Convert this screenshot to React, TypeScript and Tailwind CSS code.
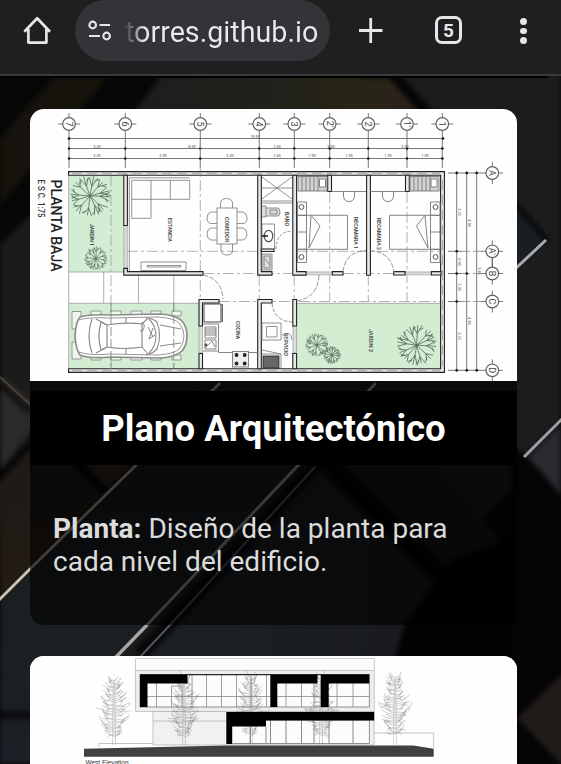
import React from "react";

/* ---------- shared drawing helpers ---------- */

function noise(n: number) {
  const v = Math.sin(n * 127.1 + 11.7) * 43758.5453;
  return v - Math.floor(v);
}

const f = (n: number) => n.toFixed(1);

function PlanTree({ x, y, r, seed }: { x: number; y: number; r: number; seed: number }) {
  const count = 12;
  let d = "";
  for (let i = 0; i < count; i++) {
    const a = (i / count) * Math.PI * 2 + noise(seed + i) * 0.25;
    const m = r * (0.45 + noise(seed + i * 3) * 0.2);
    const mx = x + Math.cos(a) * m;
    const my = y + Math.sin(a) * m;
    d += `M${f(x)} ${f(y)}L${f(mx)} ${f(my)}`;
    for (const s of [-0.2, 0.02, 0.24]) {
      const e = r * (0.88 + noise(seed + i * 7 + s * 10) * 0.14);
      d += `M${f(mx)} ${f(my)}L${f(x + Math.cos(a + s) * e)} ${f(y + Math.sin(a + s) * e)}`;
    }
    const k = r * 0.76;
    d += `M${f(x + Math.cos(a + 0.12) * k)} ${f(y + Math.sin(a + 0.12) * k)}L${f(x + Math.cos(a + 0.33) * r * 0.9)} ${f(y + Math.sin(a + 0.33) * r * 0.9)}`;
  }
  return <path d={d} stroke="#4a6352" strokeWidth={r > 15 ? 0.75 : 0.6} fill="none" />;
}

function ElevationTree({ x, top, seed }: { x: number; top: number; seed: number }) {
  const base = 745;
  let d = `M${x - 1.5} ${base}L${x - 0.6} ${top + 6}M${x + 1.5} ${base}L${x + 0.8} ${top + 4}`;
  for (let i = 0; i < 58; i++) {
    const t = i / 58;
    const y0 = top + 3 + t * 58;
    const side = i % 2 ? 1 : -1;
    const spread = t < 0.6 ? 6 + t * 20 : 18 - (t - 0.6) * 26;
    const len = spread * (0.45 + noise(seed + i * 4) * 0.55);
    const ex = x + side * len;
    const ey = y0 - 2 + (noise(seed + i * 5) - 0.6) * 7;
    const mx = x + side * len * 0.55;
    const my = y0 + (noise(seed + i * 2) - 0.3) * 3;
    d += `M${x} ${f(y0 + 1)}L${f(mx)} ${f(my)}L${f(ex)} ${f(ey)}M${f(mx)} ${f(my)}l${f(side * 2.5)} ${f(noise(seed + i * 9) * 7 - 3)}M${f(ex)} ${f(ey)}l${f(side * 1)} ${f(noise(seed + i) * 6 - 4)}`;
  }
  return <path d={d} stroke="#777" strokeWidth="0.5" strokeOpacity="0.65" fill="none" />;
}

function Wall({ d }: { d: string }) {
  return <path d={d} fill="#e8e8e8" stroke="#222" strokeWidth="1.1" />;
}

function VText({ x, y, len, size, children, weight = 400, fill = "#333" }: { x: number; y: number; len: number; size: number; children: string; weight?: number; fill?: string }) {
  return (
    <text transform={`translate(${x} ${y}) rotate(90)`} fontSize={size} fontWeight={weight} textLength={len} lengthAdjust="spacingAndGlyphs" fill={fill}>
      {children}
    </text>
  );
}

/* ---------- page background ---------- */

function Backdrop() {
  return (
    <svg className="absolute inset-0 h-full w-full" viewBox="0 74 561 690" preserveAspectRatio="none" aria-hidden="true">
      <defs>
        <filter id="soft" x="-5%" y="-5%" width="110%" height="110%" colorInterpolationFilters="sRGB"><feGaussianBlur stdDeviation="2.6" /></filter>
        <filter id="edge" x="-5%" y="-5%" width="110%" height="110%" colorInterpolationFilters="sRGB"><feGaussianBlur stdDeviation="0.6" /></filter>
        <linearGradient id="slab" x1="0" x2="1"><stop offset="0" stopColor="#1d1d1c" /><stop offset="0.45" stopColor="#20201c" /><stop offset="0.75" stopColor="#282516" /><stop offset="1" stopColor="#2a211c" /></linearGradient>
        <linearGradient id="brown" x1="0" y1="0" x2="0" y2="1"><stop offset="0" stopColor="#1c1a18" /><stop offset="1" stopColor="#241b14" /></linearGradient>
        <linearGradient id="cool" x1="0" y1="0" x2="0" y2="1"><stop offset="0" stopColor="#191a1d" /><stop offset="0.55" stopColor="#1a2022" /><stop offset="1" stopColor="#1c1f26" /></linearGradient>
        <linearGradient id="steel" x1="0" x2="1"><stop offset="0" stopColor="#1d2125" /><stop offset="1" stopColor="#17181b" /></linearGradient>
      </defs>
      <rect y="74" width="561" height="690" fill="#070707" />
      <g filter="url(#soft)">
        <path d="M12 124L58 74H110L0 205V140Z" fill="#15130b" />
        <path d="M0 245L140 110L165 74H385L561 260V440L240 764H0Z" fill="#1b1b1b" />
        <path d="M134 112L163 74H392L422 112Z" fill="url(#slab)" />
        <path d="M362 74L390 74L424 112" stroke="#050505" strokeWidth="7" fill="none" />
        <path d="M400 74H561V440L517 470V205Z" fill="#1b1c1e" />
        <path d="M510 192L552 238L510 275Z" fill="#191e23" />
        <path d="M510 198L548 241" stroke="#070707" strokeWidth="5" />
        <path d="M0 375L42 408L32 428L0 470Z" fill="#2c2a29" />
        <path d="M-4 476L40 430L137 465L0 600Z" fill="url(#brown)" />
        <path d="M-4 480L38 436" stroke="#060606" strokeWidth="7" />
        <path d="M0 384L30 412" stroke="#0a0909" strokeWidth="5" />
        <path d="M104 490L80 464L90 440L200 391Z" fill="#2c251d" />
        <path d="M75 460L104 492" stroke="#020202" strokeWidth="9" />
        <path d="M0 602L142 465H305L116 655V764H0Z" fill="url(#cool)" />
        <path d="M140 660L325 467H340L520 660Z" fill="url(#steel)" />
        <path d="M345 467H440L517 560V640L480 610Z" fill="#161618" />
        <path d="M318 454L517 650" stroke="#040404" strokeWidth="20" />
        <path d="M398 764L396 655L404 625L450 560L561 520V764Z" fill="#020202" />
        <path d="M140 655L315 467" stroke="#08080b" strokeWidth="15" />
        <path d="M512 445L528 458L561 496V764H512Z" fill="#040404" />
        <path d="M529 458L561 427V495Z" fill="#292b30" />
        <path d="M517 718L565 672V768Z" fill="#211c1a" />
        <path d="M-4 715H40" stroke="#08090c" strokeWidth="7" />
      </g>
      <g filter="url(#edge)" fill="none">
        <path d="M0 377L32 406" stroke="#4a4036" strokeWidth="1.8" />
        <path d="M-2 601L31 568" stroke="#cdc4b4" strokeWidth="2.8" />
        <path d="M31 568L220 383" stroke="#a49c92" strokeWidth="2.7" />
        <path d="M116 657L147 625" stroke="#a6a6a8" strokeWidth="3.4" />
        <path d="M147 625L376 383" stroke="#8f9298" strokeWidth="2.8" />
        <path d="M140 657L170 625L315 467" stroke="#53555b" strokeWidth="2" />
        <path d="M514 270L546 240" stroke="#aaa9ab" strokeWidth="3" />
        <path d="M524 457L565 416" stroke="#a0a0a4" strokeWidth="3" />
      </g>
    </svg>
  );
}

/* ---------- floor plan ---------- */

const axes: [number, string][] = [[69, "7"], [125.3, "6"], [200.3, "5"], [259.3, "4"], [294.3, "3"], [329.7, "2'"], [368.3, "2"], [407, "1'"], [442.3, "1"]];
const rows: [number, string][] = [[173, "A"], [251.3, "A'"], [273.5, "B"], [301.5, "C"], [370.3, "D"]];

function FloorPlan() {
  const line = "#777";
  return (
    <svg className="block h-[272px] w-full" viewBox="30 109 487 272" fontFamily="Roboto, 'Liberation Sans', sans-serif" role="img" aria-label="Planta baja">
      <rect x="30" y="109" width="487" height="272" fill="#fefefe" />
      <g fill="#d2edd2">
        <rect x="69" y="175" width="55" height="97" />
        <rect x="69" y="303.3" width="130" height="66" />
        <rect x="296" y="303.3" width="145" height="66" />
      </g>

      {/* axis bubbles and dimension strings */}
      <g stroke="#555" strokeWidth="0.8" fill="none">
        {axes.map(([x]) => (
          <g key={x}>
            <circle cx={x} cy="124" r="6.3" strokeWidth="1.2" stroke="#666" />
            <path d={`M${x - 11} 124h5M${x + 6} 124h5M${x} 113v5M${x} 130v38`} />
          </g>
        ))}
        <path d="M68 138.5H444M68 148.5H444M68 158.5H444" />
        {rows.map(([y]) => (
          <g key={y}>
            <circle cx="492.3" cy={y} r="6.3" strokeWidth="1.2" stroke="#666" />
            <path d={`M481 ${y}h5M498 ${y}h5M492.3 ${y - 11}v5M492.3 ${y + 6}v5M448 ${y}h14`} />
          </g>
        ))}
        <path d="M456.7 171V372M466.7 171V372M476.7 171V372M462 173H481M462 370.3H481M492.3 258V267" />
        <path d="M462 251.3H481M462 273.5H481M462 301.5H481" strokeDasharray="8 3" stroke="#888" />
      </g>
      <g fill="#111">
        {axes.map(([x, n]) => (
          <React.Fragment key={n}>
            {[148.5, 158.5].map((y) => <circle key={y} cx={x} cy={y} r="1.2" />)}
            <text transform={`translate(${x - 3.2} 124) rotate(90)`} textAnchor="middle" fontSize="9" fill="#444">{n}</text>
          </React.Fragment>
        ))}
        <circle cx="69" cy="138.5" r="1.3" /><circle cx="443" cy="138.5" r="1.3" />
        {rows.map(([y, n]) => (
          <React.Fragment key={n}>
            <circle cx="456.7" cy={y} r="1.3" />
            {y !== 251.3 && y !== 301.5 && <circle cx="466.7" cy={y} r="1.3" />}
            <text transform={`translate(489 ${y}) rotate(90)`} textAnchor="middle" fontSize="9" fill="#444">{n}</text>
          </React.Fragment>
        ))}
        <circle cx="476.7" cy="173" r="1.3" /><circle cx="476.7" cy="370.3" r="1.3" />
      </g>
      <g fontSize="3.8" fontWeight="500" fill="#777" textAnchor="middle">
        <text x="255" y="137.5">19.95</text>
        <text x="97" y="147.6">3.20</text><text x="192" y="147.6">8.00</text><text x="277" y="147.6">1.65</text><text x="331" y="147.6">3.90</text><text x="405" y="147.6">3.90</text>
        <text x="97" y="157.3">3.20</text><text x="163" y="157.3">3.90</text><text x="230" y="157.3">3.30</text><text x="277" y="157.3">1.65</text><text x="312" y="157.3">1.90</text><text x="349" y="157.3">1.95</text><text x="388" y="157.3">1.95</text><text x="425" y="157.3">1.90</text>
        {([[458, 212, "3.75"], [468, 223, "4.90"], [458, 262, "0.90"], [458, 287, "1.30"], [478, 271, "9.45"], [458, 336, "3.75"], [468, 321, "4.85"]] as [number, number, string][]).map(([x, y, t]) => (
          <text key={x + "-" + y} transform={`translate(${x} ${y}) rotate(90)`}>{t}</text>
        ))}
      </g>

      {/* dashed axis lines */}
      <g stroke="#a0a0a0" strokeWidth="0.8" fill="none" strokeDasharray="11 3 3 3">
        <path d="M111 175V369M200.3 140V300M173.8 303V369M329.7 192V301M368.3 275V301M407 192V301M294.3 275V301M259.3 275V301" />
        <path d="M127 251.3H257M297 251.3H441M203 273.5H441M219 301.5H441" />
      </g>

      {/* site and paving */}
      <path d="M68.7 175V369M69 272H124M69 303.3H199M103.7 272V303M138.5 275V303M173.8 275V303M297 303.3H441" stroke="#9a9a9a" strokeWidth="0.8" fill="none" />

      {/* walls */}
      <path d="M123.9 225h3.4v44h-3.4zM199 326h3.5v27H199zM293 326h3.5v27H293zM306 272h27v2.8h-27zM405 272h27v2.8h-27z" fill="#ddd" stroke="#999" strokeWidth="0.7" />
      <Wall d="M68.6 171.6H444.4V372.4H68.6V368.8H440.6V175.2H68.6Z" />
      <path d="M72 173.4H440M72 370.6H440M442.5 180V366" stroke="#999" strokeWidth="0.8" strokeDasharray="10 5" />
      <Wall d="M123.8 175.2h3.6v50.3h-3.6z" />
      <Wall d="M123.8 268.4h3.6v3.2H203v3.5H123.8z" />
      <Wall d="M199 299.5H219V303H202.5V326H199z" />
      <Wall d="M199 353.5h3.5V368.8H199z" />
      <Wall d="M257.7 175.2h3.6V271.6H272v3.5H257.7z" />
      <Wall d="M257.7 299.5H272V303H261.3V368.8H257.7z" />
      <Wall d="M292.8 175.2h3.8V271.6H306v3.5H292.8z" />
      <Wall d="M292.8 299.5h3.8V326h-3.8zM292.8 353.5h3.8v15.3h-3.8z" />
      <Wall d="M366.6 175.2h3.8V275.2h-3.8z" />
      <Wall d="M327.7 175.2h3.8V191.5h-3.8zM405.5 175.2h3.8V191.5h-3.8z" />
      <Wall d="M332.3 271.6H343V275H332.3zM393.7 271.6H405V275H393.7zM431.4 271.6H441V275H431.4z" />
      <Wall d="M261.3 249H274V251.5H261.3z" />

      {/* living and dining furniture */}
      <g stroke={line} strokeWidth="0.8" fill="none">
        <path d="M129.3 177.8H189.7M129.3 177.8V271M131.7 180.3H189.7V199.3H151V218.3H131.7ZM131.7 199.3H151M151 180.3V199.3M170.3 180.3V199.3" />
        <path d="M141 262H186V270.5H141Z" />
        <path d="M147 265.5H181V267H147Z" />
        <rect x="217" y="208" width="20" height="36" />
        <path d="M220.5 208V203Q221 198.500 226.500 198.500T232.500 203V208M221 244V250Q221.500 255 227 255T232.500 250V244" />
        <path d="M217 212H211Q207 213 207 218T211 223.500H217M217 228H211Q207 229 207 234T211 240H217M237 212H243Q247 213 247 218T243 223.500H237M237 228H243Q247 229 247 234T243 240H237" />
      </g>

      {/* bathroom and service */}
      <g stroke={line} strokeWidth="0.8" fill="none">
        <path d="M262 201H292M262 203H292M262 177L292 199M262 199L292 177M262 188H292" />
        <path d="M262 206H266V217H262M266 208H278Q280 208 280 212T278 216H266M270 210H277V214H270Z" fill="#ddd" />
        <path d="M262 224H274.500V249H262Z" /><ellipse cx="268.500" cy="236" rx="4.300" ry="5.700" strokeWidth="1.2" stroke="#555" /><path d="M262 236H268" stroke="#111" strokeWidth="1.500" />
        <path d="M262 254H272V270H262ZM264 256H270V268H264ZM264 258L270 265" fill="#ddd" />
        <path d="M276 249Q276 232 292 231" strokeDasharray="3 1.5" />
        <path d="M262 323H281V340H262ZM266.500 326.500H277V337H266.500Z" />
        <path d="M262 350L281 354M262 354H281V368M282 335Q291 330 292 340" />
        <rect x="263" y="356" width="16" height="12" fill="#666" stroke="#222" />
        <path d="M272 303Q274 321 292 322" strokeDasharray="4 1.5" />
      </g>

      {/* kitchen */}
      <g stroke={line} strokeWidth="0.9" fill="none">
        <path d="M204 304H221V322H204Z" stroke="#333" /><path d="M222.300 304V322" stroke="#333" />
        <path d="M203 324H218.500V352.500H257.500M203 351H218M205 327H216V338H205ZM205 329H216M205 331H216M205 333H216M205 335H216" />
        <path d="M205 340H216V349H205ZM205 348L212 341L215 347" /><circle cx="206" cy="345" r="1.200" fill="#222" />
        <rect x="232.500" y="351.500" width="16" height="15.500" fill="#eee" />
      </g>
      <g fill="#222"><circle cx="236.500" cy="355" r="1.900" /><circle cx="244.700" cy="355" r="1.900" /><circle cx="236.500" cy="363.500" r="1.900" /><circle cx="244.700" cy="363.500" r="1.900" /></g>

      {/* doors */}
      <g stroke="#888" strokeWidth="0.9" fill="none" strokeDasharray="5 1.5">
        <path d="M203 275Q222 279 223 299" />
        <path d="M319 275Q318 298 296 301" />
        <path d="M343 272Q345 252 366 250.500M370 250.500Q391 252 394 272" />
      </g>

      {/* bedrooms */}
      <g stroke={line} strokeWidth="0.9" fill="none">
        <rect x="298" y="176.500" width="29" height="14.500" fill="#d4d4d4" /><rect x="410" y="176.500" width="29" height="14.500" fill="#d4d4d4" />
        <path d="M302 177V191M306 177V191M310 177V191M314 177V191M318 177V191M414 177V191M418 177V191M422 177V191M426 177V191M430 177V191" />
        <path d="M319.500 179H325.500V187H319.500ZM431 179H437V187H431Z" fill="#fff" />
        <path d="M331.500 191.500H366M370 191.500H405.500M343.500 191.500V196Q344 201.500 349 201.500T354.500 196V191.500M382.500 191.500V196Q383 201.500 388 201.500T393.500 196V191.500" />
        <path d="M297.500 202H306.500V215.300H297.500ZM297.500 249.300H306.500V262.500H297.500ZM297.500 215.300H306.500V249.300H297.500ZM297.500 232H306.500M306.500 215.300H347.500V249.300H306.500M311 215.300L320 226L309 248Z" />
        <path d="M430.500 202H440V215.300H430.500ZM430.500 249.300H440V262.500H430.500ZM430.500 215.300H440V249.300H430.500ZM430.500 232H440M430.500 215.300H389.500V249.300H430.500M425 215.300L416.500 226L428 248Z" />
        <g stroke="#444"><circle cx="301.500" cy="207" r="2.400" /><circle cx="301.500" cy="257" r="2.400" /><circle cx="435.500" cy="207" r="2.400" /><circle cx="435.500" cy="257" r="2.400" /></g>
      </g>

      {/* planting */}
      <PlanTree x={90} y={196} r={20.5} seed={3} />
      <PlanTree x={96} y={258.5} r={12} seed={11} />
      <PlanTree x={317} y={345} r={12} seed={23} />
      <PlanTree x={332} y={355} r={9} seed={31} />
      <PlanTree x={416.7} y={345.3} r={20.5} seed={47} />

      {/* parked car */}
      <g stroke="#8c8c8c" strokeWidth="0.9" fill="none">
        <path d="M72 311.500H81V329H72ZM72 342H81V359H72ZM91 311H101V316H91ZM111 311H121V316H111ZM131 311H142V316H131ZM151 311H161V316H151ZM172 311H181V316H172ZM91 355H101V360H91ZM111 355H121V360H111ZM131 355H142V360H131ZM151 355H161V360H151ZM172 355H181V360H172Z" fill="#eef7ee" />
        <path d="M80 317Q90 314 110 315L160 314Q176 315 182 321Q187 327 187 336Q187 345 182 351Q176 357 160 358L110 357Q90 359 80 355Q76 350 75 336Q76 321 80 317Z" fill="#fff" strokeWidth="1.7" />
        <path d="M78 320Q88 317 110 318L158 317Q175 318 180 324Q184 330 184 336Q184 343 180 348Q175 354 158 355L110 354Q90 356 79 352" />
        <path d="M92 319Q86 336 92 353M101 322Q97 336 101 350L107 347V325ZM107 325Q124 322 142 324V347Q124 350 107 347Z" strokeWidth="1.200" />
        <path d="M146 318Q152 318 157 322Q162 336 157 349Q152 354 146 355M149 319Q156 326 156 336Q156 346 149 353M142 324L148 318M142 347L148 354M107 325L96 319M107 347L96 353M160 325L181 329M160 346L181 343M126 317V323M126 349V355" strokeWidth="1.100" />
        <path d="M141 323Q145 322 144 328Q143 332 140 331M148 327L153 337M153 328L149 339L155 335" stroke="#777" strokeWidth="0.9" />
      </g>
      <path d="M111 303V369M173.800 303V369" stroke="#888" strokeWidth="0.9" strokeDasharray="9 3" />

      {/* labels */}
      <VText x={51} y={179.500} len={92} size={15.300} weight={500} fill="#222">PLANTA BAJA</VText>
      <VText x={38} y={179.500} len={38} size={8.500} weight={500}>E S C.  1:75</VText>
      <VText x={90} y={224} len={22} size={4.800} weight={500}>JARDIN 1</VText>
      <VText x={168} y={218} len={24} size={4.800} weight={500}>ESTANCIA</VText>
      <VText x={225} y={217} len={25} size={4.800} weight={500}>COMEDOR</VText>
      <VText x={284.500} y={212} len={14} size={4.800} weight={500}>BAÑO</VText>
      <VText x={353.500} y={217} len={32} size={4.800} weight={500}>RECAMARA 1</VText>
      <VText x={377} y={218} len={32} size={4.800} weight={500}>RECAMARA 2</VText>
      <VText x={235.500} y={321} len={18} size={4.800} weight={500}>COCINA</VText>
      <VText x={283.500} y={333} len={23} size={4.800} weight={500}>SERVICIO</VText>
      <VText x={368.500} y={329} len={23} size={4.800} weight={500}>JARDIN 2</VText>
    </svg>
  );
}

/* ---------- west elevation ---------- */

function Elevation() {
  return (
    <svg className="block h-[108px] w-full" viewBox="30 656 487 108" fontFamily="'Liberation Sans', Arial, sans-serif" role="img" aria-label="West Elevation">
      <rect x="30" y="656" width="487" height="108" fill="#fefefe" />
      <path d="M135.500 658.500H374.300V670.500H135.500Z" fill="#fbfbfb" stroke="#bdbdbd" strokeWidth="0.8" />
      <path d="M135.500 670.500H374.300V711.500H135.500Z" fill="#ededed" stroke="#bdbdbd" strokeWidth="0.8" />
      <path d="M153 711.500H374V745H153Z" fill="#f1f1f1" stroke="#b5b5b5" strokeWidth="0.8" />
      <path d="M153 721H226M99 747V743.500H153M374 733H433.700V748" stroke="#b5b5b5" strokeWidth="0.8" fill="none" />
      <rect x="140" y="674.700" width="229.300" height="32.300" fill="#fcfcfc" stroke="#777" strokeWidth="0.8" />
      <rect x="232" y="720" width="137.300" height="23.500" fill="#fcfcfc" stroke="#777" strokeWidth="0.8" />
      <path d="M147 696.500H369M156.500 683V707M171.500 686H182V707M171.500 686V707M192 675V707M206.500 675V707M221.500 675V707M236.500 675V707M251 675V707M266.500 675V707M286 683V707M301.500 683V707M314 683V707M337 683V707M353 683V707" stroke="#888" strokeWidth="0.8" fill="none" />
      <path d="M250.500 727V743M266 727V743M270.500 720V743M286 720V743M301.500 720V743M314 720V743M329 720V743M353 720V743" stroke="#888" strokeWidth="1" fill="none" />
      <ElevationTree x={114} top={676} seed={1} />
      <ElevationTree x={184} top={676} seed={20} />
      <ElevationTree x={251} top={674} seed={40} />
      <ElevationTree x={321} top={675} seed={60} />
      <ElevationTree x={395} top={673} seed={80} />
      <path d="M140 674.700H187.500V683.500H147.500V707H140ZM270.300 674.700H317.500V683.500H277.300V707H270.300ZM320.700 674.700H369.300V683.500H328.700V707H320.700ZM226.300 712H374.200V720.600H266V726.600H232V744H226.300Z" fill="#000" />
      <path d="M140 674.700H369.300" stroke="#111" strokeWidth="1" />
      <path d="M84 748.700L226 745.600H413.500L433.700 748.700V756.800H84Z" fill="#404040" />
      <text x="85.500" y="764.500" fontSize="6.300" fill="#333" textLength="43" lengthAdjust="spacingAndGlyphs">West Elevation</text>
    </svg>
  );
}

/* ---------- browser bar ---------- */

function BrowserBar() {
  return (
    <header className="flex h-[74px] w-full items-start bg-[#1f1f1f] text-[#e6e6e8]">
      <svg className="mt-[14.5px] ml-[23px] h-[32px] w-[32px] shrink-0" viewBox="0 0 32 32" fill="none" stroke="currentColor" strokeWidth="2.7" strokeLinejoin="round" strokeLinecap="butt" aria-label="Inicio">
        <path d="M1.300 16.800L14.200 3.200L27 16.800M5.400 14V27.600H23.400V14" />
      </svg>
      <div className="ml-[20px] flex h-[61px] w-[255px] shrink-0 items-center rounded-full bg-[#333438]">
        <svg className="ml-[13px] h-[24px] w-[24px] shrink-0" viewBox="0 0 24 24" fill="none" stroke="currentColor" strokeWidth="2.200" aria-hidden="true">
          <circle cx="4.700" cy="6" r="3.300" /><path d="M11.500 6H22M1 17H12" /><circle cx="18.600" cy="17" r="3.300" />
        </svg>
        <span className="ml-[13px] bg-gradient-to-r from-[#4a4b4f] from-[1%] to-[#eaeaec] to-[10%] bg-clip-text pt-[2px] font-[Roboto,sans-serif] text-[28.7px] leading-[36px] whitespace-nowrap text-transparent">torres.github.io</span>
      </div>
      <svg className="mt-[17px] ml-[27px] h-[28px] w-[28px] shrink-0" viewBox="0 0 28 28" stroke="currentColor" strokeWidth="2.800" aria-label="Nueva pestaña">
        <path d="M13.700 1V26M2 13.500H25.500" />
      </svg>
      <div className="mt-[16px] ml-[50px] flex h-[28px] w-[27px] shrink-0 items-center justify-center rounded-[7px] border-[3px] border-[#e6e6e8] font-[Roboto,sans-serif] text-[19px] leading-none font-bold">5</div>
      <div className="mt-[18px] ml-[58px] flex shrink-0 flex-col gap-[3px]">
        <i className="size-[6.5px] rounded-full bg-[#e6e6e8]" />
        <i className="size-[6.5px] rounded-full bg-[#e6e6e8]" />
        <i className="size-[6.5px] rounded-full bg-[#e6e6e8]" />
      </div>
    </header>
  );
}

export default function App() {
  return (
    <div className="h-[764px] w-[561px] overflow-hidden bg-black font-[Roboto,sans-serif]">
      <BrowserBar />
      <main className="relative h-[690px] overflow-hidden">
        <Backdrop />
        <div className="relative flex flex-col">
          <div className="h-[2px] bg-[#3a3a3a]" />
          <div className="h-[2px] w-[548px] bg-black" />
          <section className="mt-[31px] mr-[44px] ml-[30px] flex h-[516px] flex-col overflow-hidden rounded-[14px] bg-black/60">
            <FloorPlan />
            <h2 className="mt-[10px] h-[74px] bg-black text-center text-[36.5px] leading-[76px] font-bold whitespace-nowrap text-white">Plano Arquitectónico</h2>
            <p className="mt-[47px] pr-6 pl-[23px] text-[28px] leading-[33px] text-[#dcdcdc]">
              <strong className="font-bold">Planta:</strong> Diseño de la planta para cada nivel del edificio.
            </p>
          </section>
          <section className="mt-[31px] mr-[44px] ml-[30px] overflow-hidden rounded-t-[14px] bg-white">
            <Elevation />
          </section>
        </div>
      </main>
    </div>
  );
}
